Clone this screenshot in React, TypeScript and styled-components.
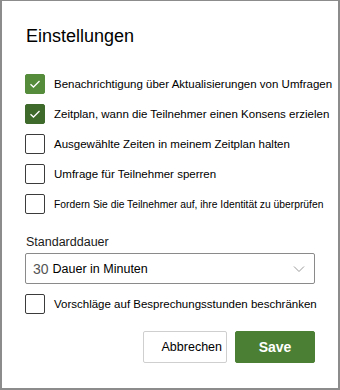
import React, { useState } from "react";
import styled, { createGlobalStyle } from "styled-components";

const Global = createGlobalStyle`
  html, body { margin: 0; padding: 0; background: #ffffff; }
  body { font-family: "Liberation Sans", Arial, sans-serif; color: #000; }
`;

const Dialog = styled.div`
  box-sizing: border-box;
  width: 340px;
  height: 390px;
  border-style: solid;
  border-color: #8c8c8c;
  border-width: 1px 2px 2px 2px;
  background: #fff;
  padding: 0 24px 0 23px;
  display: flex;
  flex-direction: column;
`;

const Title = styled.h1`
  margin: 26px 0 0 1px;
  font-size: 18px;
  font-weight: 400;
  line-height: 18px;
  color: #000;
`;

const List = styled.div`
  margin-top: 29px;
  display: flex;
  flex-direction: column;
  gap: 10px;
`;

const Row = styled.label`
  display: flex;
  align-items: center;
  gap: 9px;
  height: 20px;
`;

const Box = styled.span<{ $checked?: boolean; $tone?: string }>`
  box-sizing: border-box;
  flex: none;
  width: 20px;
  height: 20px;
  border-radius: 2px;
  border: 1px solid ${(p) => (p.$checked ? p.$tone : "#3b3b3b")};
  background: ${(p) => (p.$checked ? p.$tone : "#fff")};
  display: flex;
  align-items: center;
  justify-content: center;
`;

const Label = styled.span<{ $size?: number }>`
  font-size: ${(p) => p.$size ?? 11.5}px;
  white-space: nowrap;
  color: #000;
`;

const FieldLabel = styled.div`
  margin-top: 21px;
  margin-left: 1px;
  font-size: 12.5px;
  line-height: 14px;
  color: #1a1a1a;
`;

const Select = styled.div`
  box-sizing: border-box;
  margin-top: 4px;
  height: 31px;
  border: 1px solid #8a8a8a;
  border-radius: 2px;
  display: flex;
  align-items: center;
  padding: 0 9px 0 7px;
  width: 290px;
`;

const Num = styled.span`
  font-size: 14px;
  color: #555;
  margin-right: 4px;
`;

const SelText = styled.span`
  font-size: 12.5px;
  color: #000;
  flex: 1;
`;

const LastRow = styled(Row)`
  margin-top: 10px;
`;

const Buttons = styled.div`
  margin-top: 17px;
  display: flex;
  justify-content: flex-end;
  gap: 8px;
  width: 290px;
`;

const Button = styled.button<{ $primary?: boolean }>`
  box-sizing: border-box;
  height: 32px;
  border-radius: 2px;
  font-family: "Liberation Sans", Arial, sans-serif;
  cursor: pointer;
  ${(p) =>
    p.$primary
      ? `
    width: 80px;
    background: #4b7f34;
    border: 1px solid #4b7f34;
    color: #fff;
    font-weight: 700;
    font-size: 14px;
  `
      : `
    width: 84px;
    background: #fff;
    border: 1px solid #cfcfcf;
    color: #000;
    font-size: 12.5px;
    text-align: right;
    padding-right: 4px;
  `}
`;

const Check = () => (
  <svg width="12" height="10" viewBox="0 0 12 10">
    <path d="M1.5 5.2 L4.5 8 L10.5 2" fill="none" stroke="#fff" strokeWidth="1.3" />
  </svg>
);

const Chevron = () => (
  <svg width="12" height="8" viewBox="0 0 12 8">
    <path d="M1 1.5 L6 6.5 L11 1.5" fill="none" stroke="#9a9a9a" strokeWidth="1" />
  </svg>
);

const items = [
  { text: "Benachrichtigung über Aktualisierungen von Umfragen", checked: true, tone: "#558c3c" },
  { text: "Zeitplan, wann die Teilnehmer einen Konsens erzielen", checked: true, tone: "#3e6a2c" },
  { text: "Ausgewählte Zeiten in meinem Zeitplan halten", checked: false },
  { text: "Umfrage für Teilnehmer sperren", checked: false },
  { text: "Fordern Sie die Teilnehmer auf, ihre Identität zu überprüfen", checked: false, size: 10.3 },
];

export default function App() {
  const [state] = useState(items);
  return (
    <>
      <Global />
      <Dialog>
        <Title>Einstellungen</Title>
        <List>
          {state.map((it) => (
            <Row key={it.text}>
              <Box $checked={it.checked} $tone={it.tone}>{it.checked && <Check />}</Box>
              <Label $size={it.size}>{it.text}</Label>
            </Row>
          ))}
        </List>
        <FieldLabel>Standarddauer</FieldLabel>
        <Select>
          <Num>30</Num>
          <SelText>Dauer in Minuten</SelText>
          <Chevron />
        </Select>
        <LastRow>
          <Box />
          <Label>Vorschläge auf Besprechungsstunden beschränken</Label>
        </LastRow>
        <Buttons>
          <Button>Abbrechen</Button>
          <Button $primary>Save</Button>
        </Buttons>
      </Dialog>
    </>
  );
}
